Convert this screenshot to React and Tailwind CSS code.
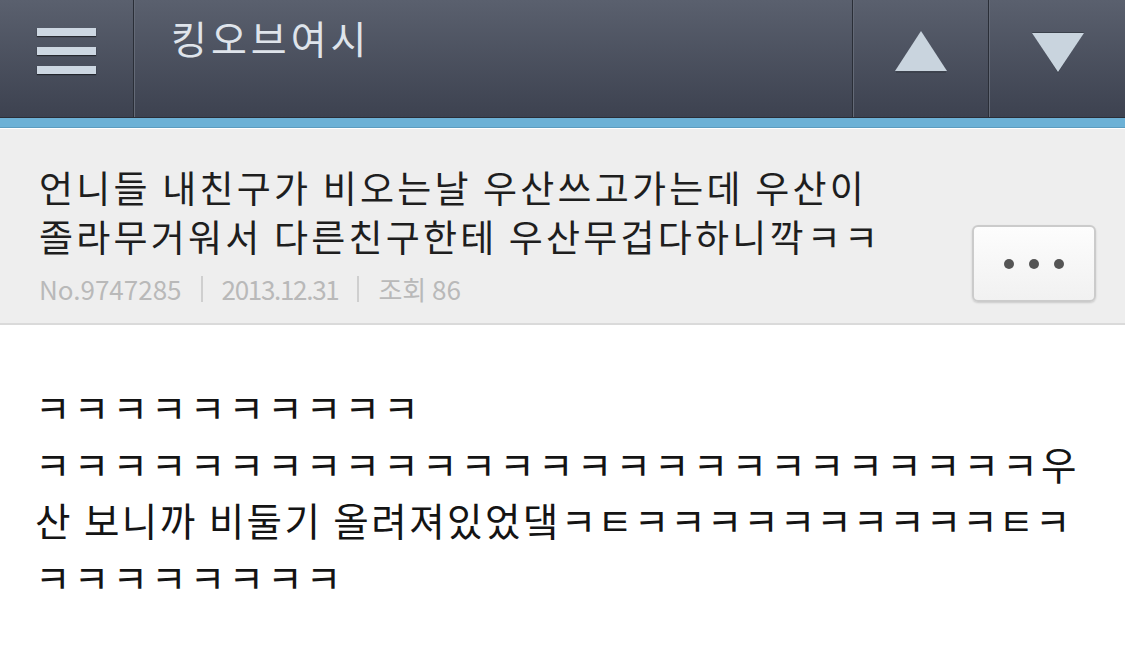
import React from "react";

const font = { fontFamily: '"Noto Sans CJK KR", "Noto Sans", sans-serif' };

function Divider() {
  return (
    <div className="flex h-full">
      <div className="w-px h-full bg-[#2a2e37]"></div>
      <div className="w-px h-full bg-[#646a77]"></div>
    </div>
  );
}

function Triangle({ down }) {
  return (
    <svg width="54" height="44" viewBox="0 0 54 44">
      {down ? (
        <>
          <polygon points="1,2 53,2 27,43" fill="#2c3039" opacity="0.6" />
          <polygon points="1,3 53,3 27,42" fill="#c9d4de" />
        </>
      ) : (
        <>
          <polygon points="27,1 53,41 1,41" fill="#c9d4de" />
          <line x1="2" y1="42" x2="52" y2="42" stroke="#2c3039" strokeOpacity="0.5" strokeWidth="1.5" />
        </>
      )}
    </svg>
  );
}

export default function App() {
  return (
    <div className="w-[1125px] h-[669px] bg-white overflow-hidden" style={font}>
      {/* Top bar */}
      <div className="h-[118px] flex bg-linear-to-b from-[#5a606e] to-[#3d4250] border-b border-[#2a2e37]">
        <div className="w-[133px] pl-[37px] pt-[28px] flex flex-col gap-[11px]">
          <div className="w-[59px] h-[8px] bg-[#cdd7e2] shadow-[0_1px_1px_rgba(0,0,0,0.5)]"></div>
          <div className="w-[59px] h-[8px] bg-[#cdd7e2] shadow-[0_1px_1px_rgba(0,0,0,0.5)]"></div>
          <div className="w-[59px] h-[8px] bg-[#cdd7e2] shadow-[0_1px_1px_rgba(0,0,0,0.5)]"></div>
        </div>
        <Divider />
        <div className="flex-1 pl-[36px] pt-[9px] text-[39px] leading-[56px] tracking-[4px] text-[#dfe4eb]">
          킹오브여시
        </div>
        <Divider />
        <div className="w-[134px] flex justify-center pt-[30px]">
          <Triangle />
        </div>
        <Divider />
        <div className="w-[135px] flex justify-center pt-[30px]">
          <Triangle down />
        </div>
      </div>

      {/* Accent stripe */}
      <div className="h-[10px] bg-[#6cb1d6] border-b border-[#5c9cbf]"></div>

      {/* Post header */}
      <div className="h-[197px] bg-[#eeeeee] border-t border-white border-b-2 border-b-[#dadada] flex justify-between pl-[39px] pr-[29px]">
        <div className="pt-[34px]">
          <div className="text-[37px] leading-[49px] tracking-[3.2px] text-[#1e1e1e]">
            언니들 내친구가 비오는날 우산쓰고가는데 우산이
            <br />
            졸라무거워서 다른친구한테 우산무겁다하니깍ㅋㅋ
          </div>
          <div className="mt-[11px] flex items-center text-[26px] leading-[34px] text-[#b9b9b9]">
            <span>No.9747285</span>
            <span className="w-[2px] h-[26px] bg-[#cfcfcf] mx-[19px]"></span>
            <span className="tracking-[-1.3px]">2013.12.31</span>
            <span className="w-[2px] h-[26px] bg-[#cfcfcf] mx-[19px]"></span>
            <span>조회 86</span>
          </div>
        </div>
        <div className="pt-[96px]">
          <div className="w-[124px] h-[77px] rounded-[6px] border-2 border-[#cbcbcb] bg-linear-to-b from-[#fdfdfd] to-[#f1f1f1] shadow-[0_1px_2px_rgba(0,0,0,0.15)] flex items-center justify-center gap-[15px]">
            <span className="w-[10px] h-[10px] rounded-full bg-[#555555]"></span>
            <span className="w-[10px] h-[10px] rounded-full bg-[#555555]"></span>
            <span className="w-[10px] h-[10px] rounded-full bg-[#555555]"></span>
          </div>
        </div>
      </div>

      {/* Body */}
      <div className="pl-[35px] pt-[53px] text-[38.6px] leading-[56.5px] tracking-[3.2px] text-[#141414] whitespace-nowrap">
        <div>ㅋㅋㅋㅋㅋㅋㅋㅋㅋㅋ</div>
        <div>ㅋㅋㅋㅋㅋㅋㅋㅋㅋㅋㅋㅋㅋㅋㅋㅋㅋㅋㅋㅋㅋㅋㅋㅋㅋㅋ우</div>
        <div>
          <span className="tracking-[2.4px]">산 보니까 비둘기 올려져있었댘</span>
          <span className="tracking-[1px]">ㅋㅌㅋㅋㅋㅋㅋㅋㅋㅋㅋㅋㅌㅋ</span>
        </div>
        <div>ㅋㅋㅋㅋㅋㅋㅋㅋ</div>
      </div>
    </div>
  );
}
